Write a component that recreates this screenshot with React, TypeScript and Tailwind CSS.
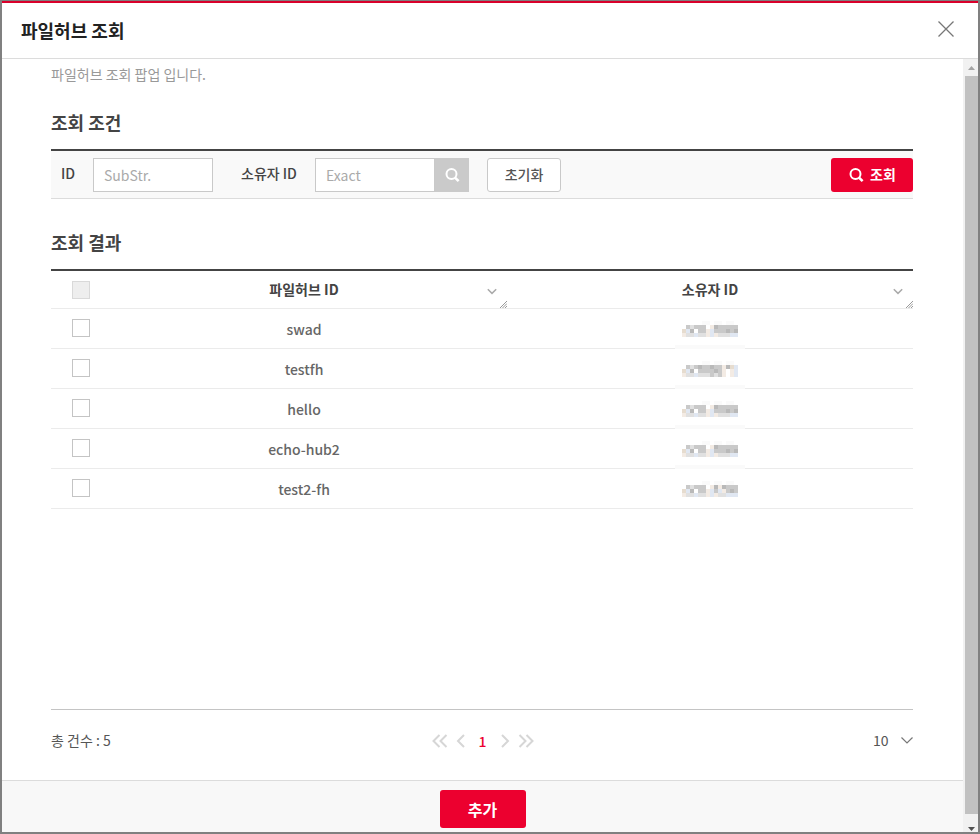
import React from 'react';

type Row = { id: string; mask: string[] };

const shades: Record<string, string> = {
  '.': 'fill-[#fafafa]',
  a: 'fill-[#f3ebe4]',
  t: 'fill-[#e6dccf]',
  b: 'fill-[#e0e7f2]',
  c: 'fill-[#e0e0e0]',
  d: 'fill-[#c9c9c9]',
  e: 'fill-[#b9b9b9]',
};

const plain = ['     .. .. .. ', ' dcddd aeddddd', 'tbe ddabdddede', 'accbccabacccbb'];
const rows: Row[] = [
  { id: 'swad', mask: plain },
  { id: 'testfh', mask: ['     .. .. .. ', ' dcdeddeddaetb', 'tbe ddddeda ab', 'accbcccdcda ab'] },
  { id: 'hello', mask: plain },
  { id: 'echo-hub2', mask: plain },
  { id: 'test2-fh', mask: ['     .. .. .. ', ' dcddd aeaeddd', 'tbe ddabdbaded', 'accbccabaccbbb'] },
];

function Mosaic({ mask }: { mask: string[] }) {
  return (
    <svg width="56" height="16" viewBox="0 0 56 16" shapeRendering="crispEdges" className="mx-auto block" aria-hidden="true">
      {mask.map((line, y) =>
        line.split('').map((c, x) =>
          shades[c] ? <rect key={`${x}-${y}`} x={x * 4} y={y * 4} width="4" height="4" className={shades[c]} /> : null,
        ),
      )}
    </svg>
  );
}

function Magnifier() {
  return (
    <svg width="16" height="16" viewBox="0 0 16 16" fill="none" stroke="currentColor" strokeWidth="2" aria-hidden="true">
      <circle cx="7.5" cy="7" r="5" />
      <path d="M11 10.6 14.6 14.2" strokeWidth="2.6" />
    </svg>
  );
}

function Arrows({ d, width }: { d: string; width: number }) {
  return (
    <svg width={width} height="14" viewBox={`0 0 ${width} 14`} fill="none" stroke="#d6d6d6" strokeWidth="2" aria-hidden="true">
      <path d={d} />
    </svg>
  );
}

function HeaderCell({ label }: { label: string }) {
  return (
    <th scope="col" className="relative h-[38px] border-b border-[#ebebeb] p-0 pb-[2px] text-center font-bold text-[#444]">
      {label}
      <button type="button" aria-label={`${label} 메뉴`} className="absolute top-[14px] right-[7px] flex h-3 w-4 items-center justify-center">
        <svg width="10" height="7" viewBox="0 0 10 7" fill="none" stroke="#aaa" strokeWidth="1.5" aria-hidden="true">
          <path d="M.8 1.2 5 5.4 9.2 1.2" />
        </svg>
      </button>
      <svg width="7" height="7" viewBox="0 0 7 7" fill="none" stroke="#999" className="absolute right-0 bottom-0" aria-hidden="true">
        <path d="M0 7 7 0M2.5 7 7 2.5M5 7 7 5" />
      </svg>
    </th>
  );
}

const box = 'block size-[18px] appearance-none border border-[#c4c4c4] bg-white disabled:border-[#d9d9d9] disabled:bg-[#eee]';
const field = 'h-[34px] w-[120px] border border-[#c9c9c9] bg-white px-[10px] text-[#555] outline-none placeholder:text-[#aaa]';

export default function App() {
  return (
    <div className="flex min-h-screen flex-col border-2 border-t border-[#808080] bg-white font-['Noto_Sans_CJK_KR',sans-serif] text-sm text-[#555]">
      <header className="flex h-[58px] items-center justify-between border-t-2 border-b border-t-[#d9002b] border-b-[#dcdcdc] pr-6 pl-[19px]">
        <h1 className="text-[18px] font-bold text-[#222]">파일허브 조회</h1>
        <button type="button" aria-label="닫기" className="pb-1">
          <svg width="16" height="16" viewBox="0 0 16 16" fill="none" stroke="#777" strokeWidth="1.3" aria-hidden="true">
            <path d="M.5.5 15.5 15.5M15.5.5.5 15.5" />
          </svg>
        </button>
      </header>

      <div className="flex flex-1">
        <div className="flex min-w-0 flex-1 flex-col">
          <main className="flex flex-1 flex-col pr-[50px] pl-[49px]">
            <p className="pt-[5px] leading-5 text-[#999]">파일허브 조회 팝업 입니다.</p>

            <h2 className="mt-[26px] text-[18px] leading-6 font-bold text-[#444]">조회 조건</h2>
            <form className="mt-[15px] flex h-[50px] items-center border-t-2 border-b border-t-[#444] border-b-[#dcdcdc] bg-[#f9f9f9] pl-[10px]" onSubmit={(e) => e.preventDefault()}>
              <label htmlFor="hub" className="w-8 pb-[3px] font-medium text-[#444]">ID</label>
              <input id="hub" placeholder="SubStr." className={field} />
              <label htmlFor="owner" className="ml-7 w-[74px] pb-[3px] font-medium text-[#444]">소유자 ID</label>
              <input id="owner" placeholder="Exact" className={field} />
              <button type="button" aria-label="소유자 검색" className="flex h-[34px] w-[34px] items-center justify-center bg-[#cacaca] text-white">
                <Magnifier />
              </button>
              <button type="button" className="ml-[18px] h-[34px] w-[74px] rounded-[3px] border border-[#c9c9c9] bg-white pb-[2px] font-medium text-[#555]">초기화</button>
              <button type="submit" className="ml-auto flex h-[34px] w-[82px] items-center justify-center gap-[6px] rounded-[3px] bg-[#ec002f] font-bold text-white">
                <Magnifier />
                <span className="pb-[2px]">조회</span>
              </button>
            </form>

            <h2 className="mt-[31px] text-[18px] leading-6 font-bold text-[#444]">조회 결과</h2>
            <div className="mt-[15px] flex-1 border-t-2 border-b border-t-[#444] border-b-[#c4c4c4]">
              <table className="w-full table-fixed border-separate border-spacing-0">
                <colgroup>
                  <col className="w-[50px]" />
                  <col />
                  <col />
                </colgroup>
                <thead>
                  <tr>
                    <th className="border-b border-[#ebebeb] p-0 pl-[21px]">
                      <input type="checkbox" disabled aria-label="전체 선택" className={box} />
                    </th>
                    <HeaderCell label="파일허브 ID" />
                    <HeaderCell label="소유자 ID" />
                  </tr>
                </thead>
                <tbody>
                  {rows.map((row, i) => (
                    <tr key={row.id}>
                      <td className="h-10 border-b border-[#ebebeb] p-0 pb-[2px] pl-[21px]">
                        <input type="checkbox" aria-label={row.id} className={box} />
                      </td>
                      <td className="border-b border-[#ebebeb] p-0 pt-px text-center font-medium text-[#666]">{row.id}</td>
                      <td className="relative border-b border-[#ebebeb] p-0">
                        <Mosaic mask={row.mask} />
                        {i < rows.length - 1 && <span className="absolute -bottom-px left-1/2 h-1 w-[70px] -translate-x-1/2 bg-[#fafafa]" />}
                      </td>
                    </tr>
                  ))}
                </tbody>
              </table>
            </div>

            <div className="grid h-[70px] grid-cols-3 items-center pb-2">
              <p className="pb-[2px]">총 건수 : 5</p>
              <nav aria-label="페이지" className="flex items-center justify-center pl-[2px]">
                <button type="button" aria-label="처음"><Arrows width={16} d="M7.5 1 1.5 7 7.5 13M14.5 1 8.5 7 14.5 13" /></button>
                <button type="button" aria-label="이전" className="ml-2"><Arrows width={9} d="M8 1 2 7 8 13" /></button>
                <a href="#1" aria-current="page" className="w-9 pr-px text-center font-medium text-[#ec002f]">1</a>
                <button type="button" aria-label="다음"><Arrows width={9} d="M1 1 7 7 1 13" /></button>
                <button type="button" aria-label="마지막" className="ml-2"><Arrows width={16} d="M1.5 1 7.5 7 1.5 13M8.5 1 14.5 7 8.5 13" /></button>
              </nav>
              <div className="relative justify-self-end">
                <select aria-label="페이지당 건수" defaultValue="10" className="w-10 appearance-none bg-transparent pb-[2px] outline-none">
                  <option>10</option>
                  <option>20</option>
                </select>
                <svg width="12" height="7" viewBox="0 0 12 7" fill="none" stroke="#777" strokeWidth="1.2" className="pointer-events-none absolute top-[7px] right-0" aria-hidden="true">
                  <path d="M.5.5 6 6 11.5.5" />
                </svg>
              </div>
            </div>
          </main>

          <footer className="flex h-[52px] items-center justify-center border-t border-[#dcdcdc] bg-[#f8f8f8] pt-[5px]">
            <button type="button" className="h-[38px] w-[86px] rounded-[3px] bg-[#ec002f] text-base font-bold text-white">추가</button>
          </footer>
        </div>

        <div className="flex w-[15px] flex-col bg-[#f1f1f1] pl-[2px]" aria-hidden="true">
          <svg width="13" height="17" viewBox="0 0 13 17" className="fill-[#a3a3a3]">
            <path d="M3 11 6.5 7 10 11z" />
          </svg>
          <div className="flex-1 bg-[#c1c1c1]" />
          <svg width="13" height="18" viewBox="0 0 13 18" className="fill-[#505050]">
            <path d="M3 13 6.5 17 10 13z" />
          </svg>
        </div>
      </div>
    </div>
  );
}
